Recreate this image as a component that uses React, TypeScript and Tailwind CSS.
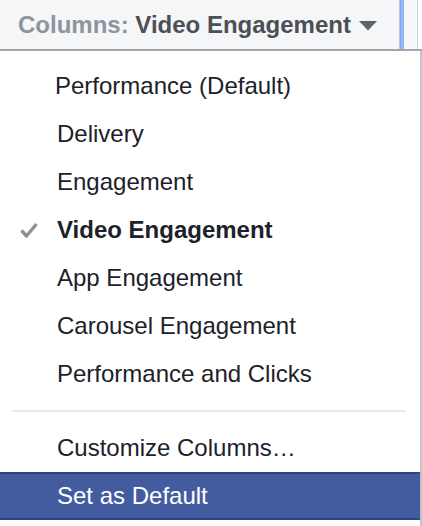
import React from 'react';

const items = [
  'Performance (Default)',
  'Delivery',
  'Engagement',
  'Video Engagement',
  'App Engagement',
  'Carousel Engagement',
  'Performance and Clicks',
];

const selected = 'Video Engagement';

const Check: React.FC = () => (
  <svg width="18" height="16" viewBox="0 0 18 16" className="absolute left-[20px] top-1/2 -translate-y-1/2">
    <path d="M1.5 8.5 L6.5 14 L16.5 2" fill="none" stroke="#8d9096" strokeWidth="3.4" strokeLinejoin="round" />
  </svg>
);

export default function App() {
  return (
    <div className="w-[422px] h-[526px] bg-white overflow-hidden font-['Liberation_Sans',Arial,sans-serif] text-[24px]">
      {/* toolbar button */}
      <div className="flex h-[51px] border-b-2 border-[#a3a5a8]">
        <div className="w-[399px] bg-[#f5f6f7] flex items-center pl-[18px] font-bold leading-none pt-[1px]">
          <span className="text-[#8d949e]">Columns:&nbsp;</span>
          <span className="text-[#4b4f56]">Video Engagement</span>
          <svg width="18" height="10" viewBox="0 0 18 10" className="ml-[8px] mt-[1px]">
            <path d="M0 0 H18 L9 9.5 Z" fill="#5f646c" />
          </svg>
        </div>
        <div className="w-[1px] bg-[#c3c5c8]" />
        <div className="w-[4px] bg-gradient-to-r from-[#6f9cf2] via-[#a9c4f8] to-[#7aa3f3]" />
        <div className="w-[13px] bg-[#f7f8f9]" />
        <div className="w-[1px] bg-[#cfd1d4]" />
        <div className="flex-1 bg-white" />
      </div>

      {/* menu */}
      <div className="w-[422px] h-[475px] border-r-2 border-[#c2c3c5] pt-[11px] text-[#1d2129]">
        {items.map((label, i) => (
          <div
            key={label}
            className={`relative h-[48px] leading-[48px] whitespace-nowrap ${i === 0 ? 'pl-[55px]' : 'pl-[57px]'} ${
              label === selected ? 'font-bold' : ''
            }`}
          >
            {label === selected && <Check />}
            {label}
          </div>
        ))}

        <div className="py-[12px] pl-[12px] pr-[14px]">
          <div className="h-[2px] bg-[#e9eaed]" />
        </div>

        <div className="h-[48px] leading-[48px] pl-[57px] whitespace-nowrap">Customize Columns…</div>
        <div className="h-[48px] leading-[44px] pl-[57px] whitespace-nowrap bg-[#435c9f] border-y-2 border-[#2f4679] text-white">
          Set as Default
        </div>
      </div>
    </div>
  );
}
